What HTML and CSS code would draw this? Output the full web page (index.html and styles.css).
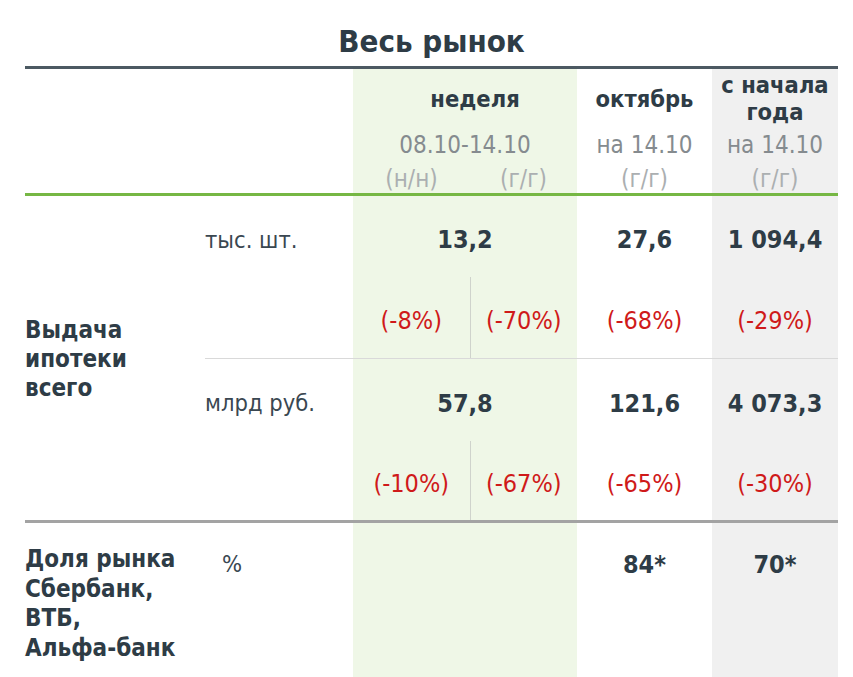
FILE: index.html
```html
<!DOCTYPE html>
<html lang="ru">
<head>
<meta charset="utf-8">
<title>Весь рынок</title>
<link rel="stylesheet" href="styles.css">
</head>
<body>
<div class="page">
  <h1 class="title">Весь рынок</h1>
  <table class="grid">
    <colgroup>
      <col class="c-label"><col class="c-unit"><col class="c-wk1"><col class="c-wk2"><col class="c-mon"><col class="c-ytd">
    </colgroup>
    <tr class="h1">
      <td></td><td></td>
      <td class="wk head" colspan="2"><span class="shift">неделя</span></td>
      <td class="head">октябрь</td>
      <td class="ytd head">с начала<br>года</td>
    </tr>
    <tr class="h2">
      <td></td><td></td>
      <td class="wk date" colspan="2">08.10-14.10</td>
      <td class="date">на 14.10</td>
      <td class="ytd date">на 14.10</td>
    </tr>
    <tr class="h3">
      <td></td><td></td>
      <td class="wk cmp">(н/н)</td>
      <td class="wk cmp">(г/г)</td>
      <td class="cmp">(г/г)</td>
      <td class="ytd cmp">(г/г)</td>
    </tr>
    <tr class="ra">
      <td class="label" rowspan="4">Выдача<br>ипотеки<br>всего</td>
      <td class="unit">тыс. шт.</td>
      <td class="wk val" colspan="2">13,2</td>
      <td class="val">27,6</td>
      <td class="ytd val">1 094,4</td>
    </tr>
    <tr class="rb">
      <td></td>
      <td class="wk pct split">(-8%)</td>
      <td class="wk pct">(-70%)</td>
      <td class="pct">(-68%)</td>
      <td class="ytd pct">(-29%)</td>
    </tr>
    <tr class="rc">
      <td class="unit">млрд руб.</td>
      <td class="wk val" colspan="2">57,8</td>
      <td class="val">121,6</td>
      <td class="ytd val">4 073,3</td>
    </tr>
    <tr class="rd">
      <td></td>
      <td class="wk pct split">(-10%)</td>
      <td class="wk pct">(-67%)</td>
      <td class="pct">(-65%)</td>
      <td class="ytd pct">(-30%)</td>
    </tr>
    <tr class="re">
      <td class="label top">Доля рынка<br>Сбербанк,<br>ВТБ,<br>Альфа-банк</td>
      <td class="unit top pctunit">%</td>
      <td class="wk" colspan="2"></td>
      <td class="val top">84*</td>
      <td class="ytd val top">70*</td>
    </tr>
  </table>
</div>
</body>
</html>
```

FILE: styles.css
```css
* { box-sizing: border-box; }
html, body { margin: 0; padding: 0; background: #ffffff; }
body {
  font-family: "DejaVu Sans Condensed", "DejaVu Sans", "Liberation Sans Narrow", sans-serif;
  font-stretch: condensed;
  color: #2e3c46;
  width: 853px;
  height: 677px;
  overflow: hidden;
}
.page { padding-left: 25px; }
.title {
  margin: 0;
  width: 813px;
  height: 66px;
  padding-top: 24px;
  font-size: 31px;
  line-height: 34px;
  font-weight: bold;
  text-align: center;
  color: #2e3c46;
}
.grid {
  width: 813px;
  table-layout: fixed;
  border-collapse: collapse;
  border-top: 3px solid #4c5962;
}
.c-label { width: 180px; }
.c-unit { width: 148px; }
.c-wk1 { width: 117px; }
.c-wk2 { width: 107px; }
.c-mon { width: 135px; }
.c-ytd { width: 126px; }
td {
  padding: 0;
  text-align: center;
  vertical-align: middle;
  font-size: 24px;
}
.wk { background: #eff7e7; }
.ytd { background: #f0f0f0; }
.h1 td { height: 58px; padding-top: 3px; }
.h2 td { height: 34px; padding-top: 3px; }
.h3 td { height: 34px; padding-top: 5px; border-bottom: 3px solid #76b744; }
.head { font-weight: bold; font-size: 23.5px; line-height: 27px; }
.shift { padding-left: 20px; }
.date { color: #858b8f; }
.cmp { color: #abafb1; }
.ra td, .rc td { height: 82px; }
.rb td, .rd td { height: 82px; padding-top: 7px; }
.rb td { border-bottom: 1px solid #d9d9d9; }
.rd td { border-bottom: 3px solid #a3a3a3; height: 81px; }
.ra td.val, .rc td.val, .ra td.unit, .rc td.unit { padding-top: 7px; }
.label {
  text-align: left;
  font-weight: bold;
  font-size: 24px;
  line-height: 29px;
  padding-top: 2px;
  border-bottom: 3px solid #a3a3a3;
}
.unit {
  text-align: left;
  font-size: 23.5px;
  color: #3a4751;
}
.val { font-weight: bold; font-size: 25px; }
.pct { color: #cf1a1a; font-size: 25px; }
.split { border-right: 1px solid #cfd3cc; }
.re td { height: 155px; vertical-align: top; padding-top: 9px; }
.re td.label { padding-top: 22px; border-bottom: none; line-height: 29.5px; }
.re td.pctunit { padding-left: 17px; padding-top: 27px; }
.re td.val { padding-top: 27px; }
```
